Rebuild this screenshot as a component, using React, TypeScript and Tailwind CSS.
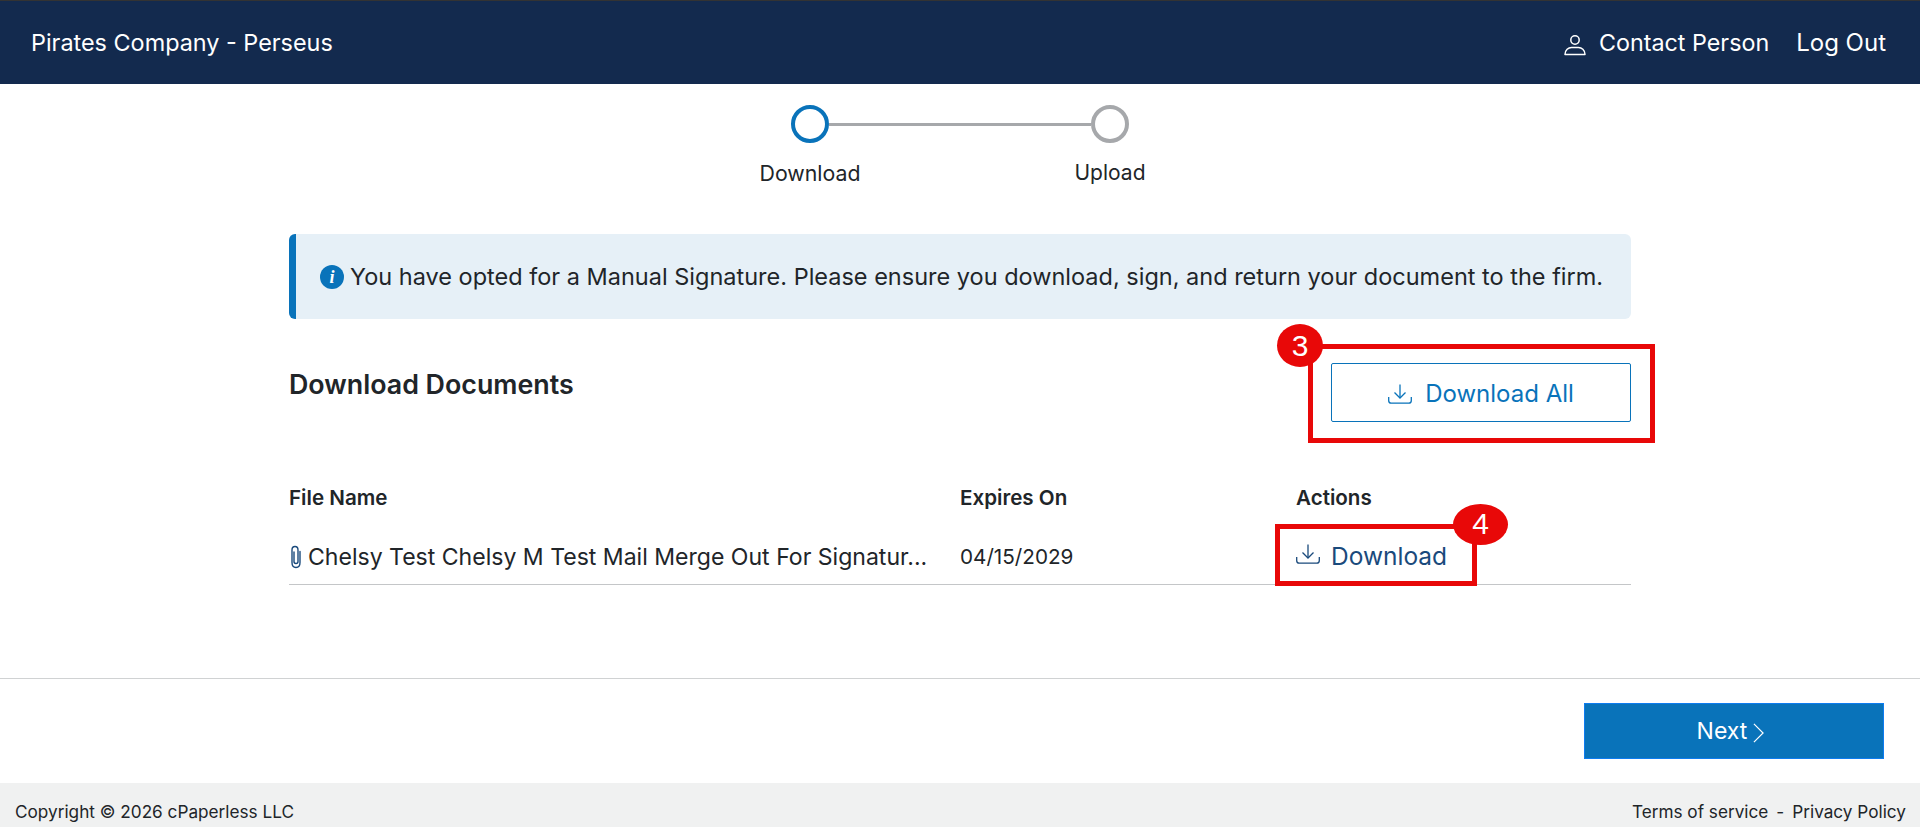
import React from "react";

const DownloadIcon = ({ className }: { className: string }) => (
  <svg viewBox="0 0 24 20" fill="none" stroke="currentColor" strokeWidth="1.3" className={className}>
    <path d="M12 0.5V14" />
    <path d="M6.5 8.5L12 14L17.5 8.5" />
    <path d="M0.7 13V16.5C0.7 18 1.7 19.2 3.2 19.2H20.8C22.3 19.2 23.3 18 23.3 16.5V13" />
  </svg>
);

const Badge = ({ n, className }: { n: string; className: string }) => (
  <div className={`absolute flex items-center justify-center rounded-[50%] bg-[#e80808] text-white font-['Liberation_Sans',sans-serif] text-[30px] leading-none ${className}`}>
    {n}
  </div>
);

export default function App() {
  return (
    <div className="flex h-screen flex-col overflow-hidden bg-white font-['Inter',sans-serif] text-[#212529]">
      <header className="flex h-[84px] shrink-0 items-center justify-between border-t border-t-[#333] bg-[#132a4e] pl-[31px] pr-[34px] text-white">
        <div className="text-[23.4px]">Pirates Company - Perseus</div>
        <div className="flex items-center text-[23.3px]">
          <svg viewBox="0 0 24 24" fill="none" stroke="currentColor" strokeWidth="1.5" className="mr-[12px] mt-[5px] h-[24px] w-[24px]">
            <circle cx="12" cy="7" r="4.2" />
            <path d="M2 21.5C2 17 5.5 14.5 8.5 14.5H15.5C18.5 14.5 22 17 22 21.5Z" strokeLinejoin="round" />
          </svg>
          <span className="mt-[2px]">Contact Person</span>
          <span className="ml-[27px] mt-[1px] text-[24px]">Log Out</span>
        </div>
      </header>

      <main className="flex flex-1 flex-col">
        <div className="mx-auto mt-[21px] flex w-[380px] flex-col">
          <div className="flex items-center justify-center">
            <div className="h-[38px] w-[38px] rounded-full border-[4px] border-[#0973ba]" />
            <div className="h-[3px] w-[262px] bg-[#a6a8ab]" />
            <div className="h-[38px] w-[38px] rounded-full border-[4px] border-[#a6a8ab]" />
          </div>
          <div className="mt-[16px] flex justify-between text-[21.3px] leading-[28px]">
            <span className="ml-[-15px] w-[110px] text-center">Download</span>
            <span className="w-[72px] translate-x-[-4px] text-center text-[21px]">Upload</span>
          </div>
        </div>

        <div className="mx-auto mt-[47px] w-[1342px]">
          <div className="flex h-[85px] items-center rounded-[6px] border-l-[7px] border-l-[#0973ba] bg-[#e6f0f7] pl-[24px] text-[23.5px]">
            <span className="mr-[6px] flex h-[24px] w-[24px] shrink-0 items-center justify-center rounded-full bg-[#0973ba] font-['Liberation_Serif',serif] text-[18px] font-bold italic leading-none text-white">i</span>
            You have opted for a Manual Signature. Please ensure you download, sign, and return your document to the firm.
          </div>

          <div className="mt-[44px] flex items-start justify-between">
            <h2 className="mt-[1px] text-[26.8px] font-semibold leading-[40px]">Download Documents</h2>
            <div className="relative h-[59px] w-[300px]">
              <button className="flex h-full w-full items-center justify-center rounded-[2px] border border-[#0973ba] bg-white pt-[2px] text-[24px] text-[#0973ba]">
                <DownloadIcon className="mr-[13px] h-[20px] w-[24px]" />
                Download All
              </button>
              <div className="absolute left-[-23px] top-[-19px] h-[99px] w-[347px] border-[5px] border-[#e80808]" />
              <Badge n="3" className="left-[-54px] top-[-39px] h-[43px] w-[46px]" />
            </div>
          </div>

          <div className="mt-[62px] grid grid-cols-[671px_336px_1fr] text-[20.6px] font-semibold leading-[28px]">
            <div>File Name</div>
            <div>Expires On</div>
            <div>Actions</div>
          </div>
          <div className="mt-[10px] grid h-[63px] grid-cols-[671px_336px_1fr] items-center border-b border-b-[#c4c6c8] pt-[8px]">
            <div className="flex min-w-0 items-center whitespace-nowrap text-[23.05px]">
              <svg viewBox="0 0 14 24" fill="none" stroke="#1a4a7c" strokeWidth="1.4" className="mr-[5px] h-[24px] w-[14px] shrink-0">
                <path d="M11 6.5V17.5C11 20.5 9.5 22.5 7 22.5C4.5 22.5 3 20.5 3 17.5V5C3 3 4.2 1.5 6 1.5C7.8 1.5 9 3 9 5V16.5C9 17.8 8.2 18.5 7 18.5C5.8 18.5 5 17.8 5 16.5V7" strokeLinecap="round" />
              </svg>
              <span>Chelsy Test Chelsy M Test Mail Merge Out For Signatur...</span>
            </div>
            <div className="text-[20.7px]">04/15/2029</div>
            <div className="relative flex items-center text-[24.5px] text-[#1a4a7c]">
              <DownloadIcon className="mr-[11px] mt-[-6px] h-[20px] w-[24px]" />
              <span className="mt-[-2px]">Download</span>
              <div className="absolute left-[-21px] top-[-16px] h-[62px] w-[202px] border-[5px] border-[#e80808]" />
              <Badge n="4" className="left-[157px] top-[-36px] h-[41px] w-[55px]" />
            </div>
          </div>
        </div>

        <div className="mt-auto flex h-[105px] items-start justify-end border-t border-t-[#d0d2d3] pr-[36px] pt-[24px]">
          <button className="flex h-[56px] w-[300px] items-center justify-center border border-[#0d7cf0] bg-[#0973ba] pr-[7px] pt-[1px] text-[23px] text-white">
            Next
            <svg viewBox="0 0 12 24" fill="none" stroke="currentColor" strokeWidth="1.3" className="ml-[6px] mt-[2px] h-[22px] w-[11px]">
              <path d="M1 2L11 12L1 22" />
            </svg>
          </button>
        </div>
      </main>

      <footer className="flex h-[44px] shrink-0 items-center justify-between bg-[#f0f1f1] pl-[15px] pr-[14px] pt-[13px] text-[17.2px]">
        <span>Copyright © 2026 cPaperless LLC</span>
        <span className="flex gap-[8px]"><span>Terms of service</span><span>-</span><span>Privacy Policy</span></span>
      </footer>
    </div>
  );
}
